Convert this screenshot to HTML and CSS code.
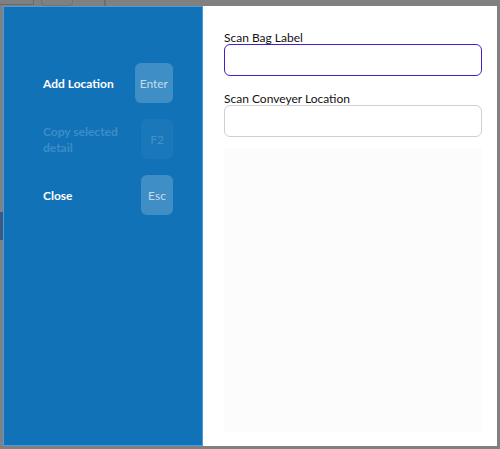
FILE: index.html
```html
<!DOCTYPE html>
<html>
<head>
<meta charset="utf-8">
<link rel="stylesheet" href="styles.css">
</head>
<body>
<div class="backdrop">
  <div class="bg-bar"></div>
  <div class="bg-chip"></div>
  <div class="bg-line"></div>
  <div class="bg-tab"></div>
</div>
<div class="modal">
  <aside class="side">
    <div class="row">
      <span class="row-label">Add Location</span>
      <span class="key">Enter</span>
    </div>
    <div class="row disabled">
      <span class="row-label">Copy selected detail</span>
      <span class="key">F2</span>
    </div>
    <div class="row">
      <span class="row-label">Close</span>
      <span class="key">Esc</span>
    </div>
  </aside>
  <main class="main">
    <label class="field-label">Scan Bag Label</label>
    <div class="input focused"></div>
    <label class="field-label">Scan Conveyer Location</label>
    <div class="input"></div>
    <div class="list"></div>
  </main>
</div>
</body>
</html>
```
FILE: styles.css
```css
html, body {
  margin: 0;
  padding: 0;
  height: 100%;
}
body {
  background: #808080;
  font-family: "Lato", "Open Sans", sans-serif;
  overflow: hidden;
  position: relative;
}
.backdrop .bg-bar {
  position: absolute;
  left: 0;
  top: 0;
  width: 33px;
  height: 4px;
  border-right: 1px solid #6a6a6a;
  border-bottom: 1px solid #6a6a6a;
}
.backdrop .bg-chip {
  position: absolute;
  left: 41px;
  top: -6px;
  width: 30px;
  height: 10px;
  border: 1px solid #727272;
  border-radius: 4px;
}
.backdrop .bg-line {
  position: absolute;
  left: 104px;
  top: 0;
  width: 2px;
  height: 6px;
  background: #6e6e6e;
}
.backdrop .bg-tab {
  position: absolute;
  left: 0;
  top: 212px;
  width: 3px;
  height: 28px;
  background: #3c5a80;
}
.modal {
  position: absolute;
  left: 3px;
  top: 6px;
  width: 494px;
  height: 440px;
  display: flex;
  background: #ffffff;
}
.side {
  width: 200px;
  box-sizing: border-box;
  background: #1172b8;
  border: 1px solid #4b9be3;
  padding: 56px 29px 0 39px;
  display: flex;
  flex-direction: column;
  gap: 16px;
}
.row {
  display: flex;
  align-items: center;
  justify-content: space-between;
  color: #ffffff;
  font-size: 12px;
  font-weight: 700;
}
.row-label {
  width: 80px;
  line-height: 16px;
  padding-top: 2px;
}
.key {
  min-width: 32px;
  height: 40px;
  box-sizing: border-box;
  padding: 0 5px;
  border-radius: 6px;
  background: rgba(255, 255, 255, 0.2);
  color: rgba(255, 255, 255, 0.7);
  font-weight: 400;
  display: flex;
  align-items: center;
  justify-content: center;
}
.row.disabled .row-label {
  color: rgba(255, 255, 255, 0.2);
}
.row.disabled .key {
  background: rgba(255, 255, 255, 0.04);
  color: rgba(255, 255, 255, 0.2);
}
.main {
  flex: 1;
  padding: 25px 15px 14px 21px;
  display: flex;
  flex-direction: column;
}
.field-label {
  font-size: 12px;
  color: #111111;
  line-height: 13px;
}
.input {
  height: 32px;
  box-sizing: border-box;
  border: 1px solid #cfcfd6;
  border-radius: 6px;
  margin-bottom: 16px;
}
.input.focused {
  border-color: #4a1fc2;
}
.list {
  flex: 1;
  margin-top: -5px;
  background: #fcfcfc;
}
```
